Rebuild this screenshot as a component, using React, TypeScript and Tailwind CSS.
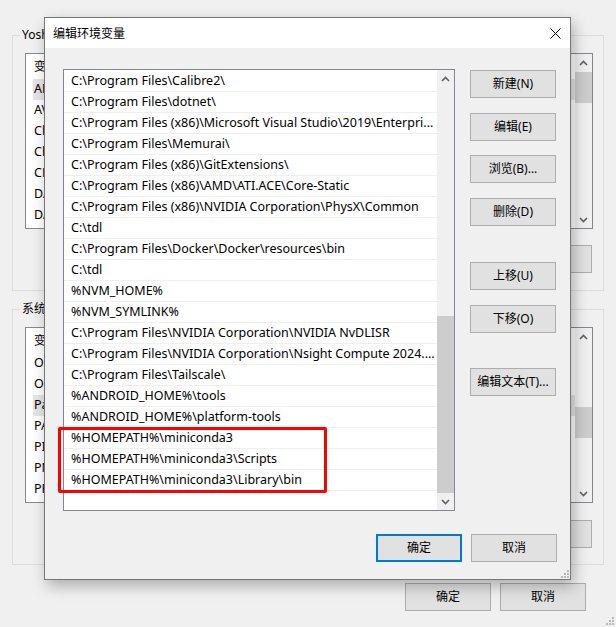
import React from "react";

const paths = [
  "C:\\Program Files\\Calibre2\\",
  "C:\\Program Files\\dotnet\\",
  "C:\\Program Files (x86)\\Microsoft Visual Studio\\2019\\Enterpri...",
  "C:\\Program Files\\Memurai\\",
  "C:\\Program Files (x86)\\GitExtensions\\",
  "C:\\Program Files (x86)\\AMD\\ATI.ACE\\Core-Static",
  "C:\\Program Files (x86)\\NVIDIA Corporation\\PhysX\\Common",
  "C:\\tdl",
  "C:\\Program Files\\Docker\\Docker\\resources\\bin",
  "C:\\tdl",
  "%NVM_HOME%",
  "%NVM_SYMLINK%",
  "C:\\Program Files\\NVIDIA Corporation\\NVIDIA NvDLISR",
  "C:\\Program Files\\NVIDIA Corporation\\Nsight Compute 2024....",
  "C:\\Program Files\\Tailscale\\",
  "%ANDROID_HOME%\\tools",
  "%ANDROID_HOME%\\platform-tools",
  "%HOMEPATH%\\miniconda3",
  "%HOMEPATH%\\miniconda3\\Scripts",
  "%HOMEPATH%\\miniconda3\\Library\\bin",
];

// only the first letters of the window behind show past the dialog
const userVars = ["AP", "AV", "Ch", "Ch", "CL", "DA", "DA"];
const sysVars = ["OL", "OS", "Pa", "PA", "PI", "PN", "PR"];

function Chevron({ up }: { up?: boolean }) {
  return (
    <svg width="9" height="6" viewBox="0 0 9 6" className="block">
      <path
        d={up ? "M1 5 L4.5 1.5 L8 5" : "M1 1 L4.5 4.5 L8 1"}
        fill="none"
        stroke="#606060"
        strokeWidth="1.6"
      />
    </svg>
  );
}

function Grip() {
  return (
    <svg width="9" height="9" viewBox="0 0 9 9" className="block">
      <rect x="7" y="1" width="2" height="2" fill="#b8b8b8" />
      <rect x="4" y="4" width="2" height="2" fill="#b8b8b8" />
      <rect x="7" y="4" width="2" height="2" fill="#b8b8b8" />
      <rect x="1" y="7" width="2" height="2" fill="#b8b8b8" />
      <rect x="4" y="7" width="2" height="2" fill="#b8b8b8" />
      <rect x="7" y="7" width="2" height="2" fill="#b8b8b8" />
    </svg>
  );
}

function Btn({
  children,
  className = "",
  primary,
}: {
  children: React.ReactNode;
  className?: string;
  primary?: boolean;
}) {
  return (
    <div
      className={`flex w-[86px] h-[28px] items-center justify-center bg-[#e1e1e1] text-[12px] text-black ${
        primary ? "border-2 border-[#0078d7]" : "border border-[#adadad]"
      } ${className}`}
    >
      {children}
    </div>
  );
}

function BackList({
  rows,
  selected,
  thumbTop,
}: {
  rows: string[];
  selected: number;
  thumbTop: string;
}) {
  return (
    <div className="flex h-[176px] border border-[#828790] bg-white">
      <div className="flex-1 pl-[7px]">
        <div className="flex h-[25px] items-center pl-[1px]">变</div>
        {rows.map((r, i) => (
          <div
            key={i}
            className={`flex h-[21px] items-center pl-[1px] text-[12.5px] ${
              i === selected ? "bg-[#e5e5e5]" : ""
            }`}
          >
            {r}
          </div>
        ))}
      </div>
      <div className="flex w-[17px] flex-col bg-[#f0f0f0]">
        <div className="flex h-[17px] items-center justify-center">
          <Chevron up />
        </div>
        <div className={`${thumbTop} flex-1`}>
          <div className="h-[31px] bg-[#cdcdcd]" />
        </div>
        <div className="flex h-[17px] items-center justify-center">
          <Chevron />
        </div>
      </div>
    </div>
  );
}

export default function App() {
  return (
    <div className="relative h-[627px] w-[616px] overflow-hidden bg-[#f0f0f0] text-[12px] text-black font-['Noto_Sans','Noto_Sans_CJK_SC',sans-serif]">
      {/* window behind */}
      <div className="pt-[35px] pl-[12px] pr-[12px]">
        <div className="relative h-[256px] border border-[#dcdcdc] pt-[17px] pl-[12px] pr-[10px]">
          <span className="absolute -top-[10px] left-[7px] bg-[#f0f0f0] px-[2px]">
            Yosh
          </span>
          <BackList rows={userVars} selected={0} thumbTop="pt-[1px]" />
          <div className="mt-[16px] flex justify-end pr-[1px]">
            <Btn> </Btn>
          </div>
        </div>
        <div className="relative mt-[18px] h-[256px] border border-[#dcdcdc] pt-[17px] pl-[12px] pr-[10px]">
          <span className="absolute -top-[10px] left-[7px] bg-[#f0f0f0] px-[2px]">
            系统
          </span>
          <BackList rows={sysVars} selected={2} thumbTop="pt-[62px]" />
          <div className="mt-[17px] flex justify-end pr-[1px]">
            <Btn> </Btn>
          </div>
        </div>
        <div className="mt-[18px] flex justify-end gap-[9px] pr-[18px]">
          <Btn>确定</Btn>
          <Btn>取消</Btn>
        </div>
      </div>
      <div className="absolute bottom-[2px] right-[2px]">
        <Grip />
      </div>

      {/* dialog */}
      <div className="absolute left-[44px] top-[17px] flex h-[563px] w-[527px] flex-col border border-[#767676] bg-[#f0f0f0] shadow-[3px_6px_14px_rgba(0,0,0,0.28)]">
        <div className="flex h-[30px] items-center justify-between bg-white pl-[8px] pr-[9px]">
          <span className="font-['Noto_Sans_CJK_SC',sans-serif]">编辑环境变量</span>
          <svg width="11" height="11" viewBox="0 0 11 11">
            <path d="M0.5 0.5 L10.5 10.5 M10.5 0.5 L0.5 10.5" stroke="#000" strokeWidth="1" />
          </svg>
        </div>
        <div className="flex flex-col pt-[21px] pl-[18px] pr-[13px]">
          <div className="flex gap-[15px]">
            <div className="flex h-[442px] w-[392px] border border-[#828790] bg-white">
              <div className="flex-1 pt-[1px]">
                {paths.map((p, i) => (
                  <div
                    key={i}
                    className="flex h-[21px] items-center whitespace-nowrap border-b border-[#efefef] pl-[7px] pt-[1px] text-[12.5px]"
                  >
                    {p}
                  </div>
                ))}
              </div>
              <div className="flex w-[17px] flex-col bg-[#f0f0f0]">
                <div className="flex h-[17px] items-center justify-center">
                  <Chevron up />
                </div>
                <div className="h-[229px]" />
                <div className="flex-1 bg-[#cdcdcd]" />
                <div className="flex h-[17px] items-center justify-center">
                  <Chevron />
                </div>
              </div>
            </div>
            <div className="flex flex-col pt-[1px]">
              <Btn>新建(N)</Btn>
              <Btn className="mt-[15px]">编辑(E)</Btn>
              <Btn className="mt-[14px]">浏览(B)...</Btn>
              <Btn className="mt-[15px]">删除(D)</Btn>
              <Btn className="mt-[36px]">上移(U)</Btn>
              <Btn className="mt-[15px]">下移(O)</Btn>
              <Btn className="mt-[35px]">编辑文本(T)...</Btn>
            </div>
          </div>
          <div className="mt-[23px] flex justify-end gap-[9px]">
            <Btn primary>确定</Btn>
            <Btn>取消</Btn>
          </div>
        </div>
        <div className="absolute bottom-[1px] right-[1px]">
          <Grip />
        </div>
      </div>

      {/* annotation */}
      <div className="absolute left-[58px] top-[427px] h-[66px] w-[269px] rounded-[2px] border-[3px] border-[#ff0000]" />
    </div>
  );
}
